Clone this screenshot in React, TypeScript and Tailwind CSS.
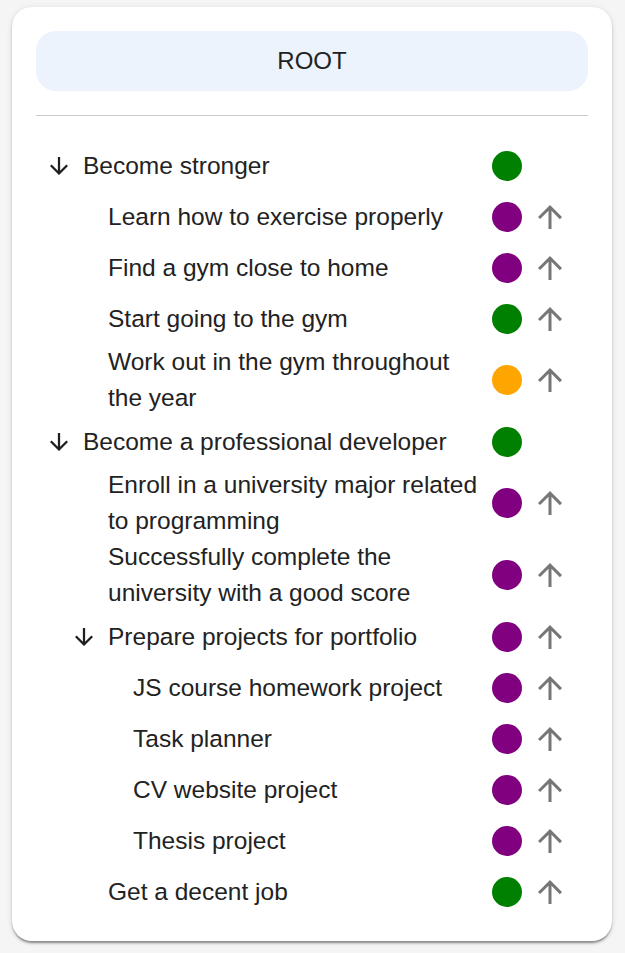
type Goal = {
  title: string;
  depth: number;
  color: string;
  expanded?: boolean;
  canMoveUp?: boolean;
};

const goals: Goal[] = [
  { title: 'Become stronger', depth: 0, color: '#008000', expanded: true },
  { title: 'Learn how to exercise properly', depth: 1, color: '#800080', canMoveUp: true },
  { title: 'Find a gym close to home', depth: 1, color: '#800080', canMoveUp: true },
  { title: 'Start going to the gym', depth: 1, color: '#008000', canMoveUp: true },
  { title: 'Work out in the gym throughout the year', depth: 1, color: '#ffa500', canMoveUp: true },
  { title: 'Become a professional developer', depth: 0, color: '#008000', expanded: true },
  { title: 'Enroll in a university major related to programming', depth: 1, color: '#800080', canMoveUp: true },
  { title: 'Successfully complete the university with a good score', depth: 1, color: '#800080', canMoveUp: true },
  { title: 'Prepare projects for portfolio', depth: 1, color: '#800080', expanded: true, canMoveUp: true },
  { title: 'JS course homework project', depth: 2, color: '#800080', canMoveUp: true },
  { title: 'Task planner', depth: 2, color: '#800080', canMoveUp: true },
  { title: 'CV website project', depth: 2, color: '#800080', canMoveUp: true },
  { title: 'Thesis project', depth: 2, color: '#800080', canMoveUp: true },
  { title: 'Get a decent job', depth: 1, color: '#008000', canMoveUp: true },
];

const ArrowDown = () => (
  <svg width="18" height="18" viewBox="4 4 16 16" className="ml-[3px] fill-[#1f1f1f]">
    <path d="M20 12l-1.41-1.41L13 16.17V4h-2v12.17l-5.58-5.59L4 12l8 8 8-8z" />
  </svg>
);

const ArrowUp = () => (
  <svg width="36" height="36" viewBox="0 0 24 24" className="fill-[#767676]">
    <path d="M4 12l1.41 1.41L11 7.83V20h2V7.83l5.58 5.59L20 12l-8-8-8 8z" />
  </svg>
);

const indents = ['pl-[11px]', 'pl-[36px]', 'pl-[61px]'];

const GoalRow = ({ goal }: { goal: Goal }) => (
  <li className={`flex min-h-[51px] items-center pr-[20px] ${indents[goal.depth]}`}>
    <span className="flex w-[36px] shrink-0 items-center">
      {goal.expanded && <ArrowDown />}
    </span>
    <span className="mr-[12px] flex-1 leading-[36px]">{goal.title}</span>
    <span
      className="h-[30px] w-[30px] shrink-0 rounded-full"
      style={{ backgroundColor: goal.color }}
    />
    <span className="ml-[10px] flex h-[36px] w-[36px] shrink-0 items-center justify-center">
      {goal.canMoveUp && <ArrowUp />}
    </span>
  </li>
);

export default function App() {
  return (
    <div className="min-h-screen bg-[#f5f5f5] pt-[7px] font-['Liberation_Sans',Arial,sans-serif] text-[#222]">
      <div className="ml-[12px] w-[600px] rounded-[20px] bg-white p-[24px] shadow-[0_3px_2px_-1px_rgba(0,0,0,0.3),0_2px_3px_0_rgba(0,0,0,0.14),0_1px_6px_0_rgba(0,0,0,0.1)]">
        <div className="flex h-[60px] items-center justify-center rounded-[20px] bg-[#ecf3fc] text-[24px] uppercase">
          Root
        </div>
        <hr className="mt-[24px] mb-[24px] border-[#cccccc]" />
        <ul className="text-[24.5px]">
          {goals.map((goal) => (
            <GoalRow key={goal.title} goal={goal} />
          ))}
        </ul>
      </div>
    </div>
  );
}
